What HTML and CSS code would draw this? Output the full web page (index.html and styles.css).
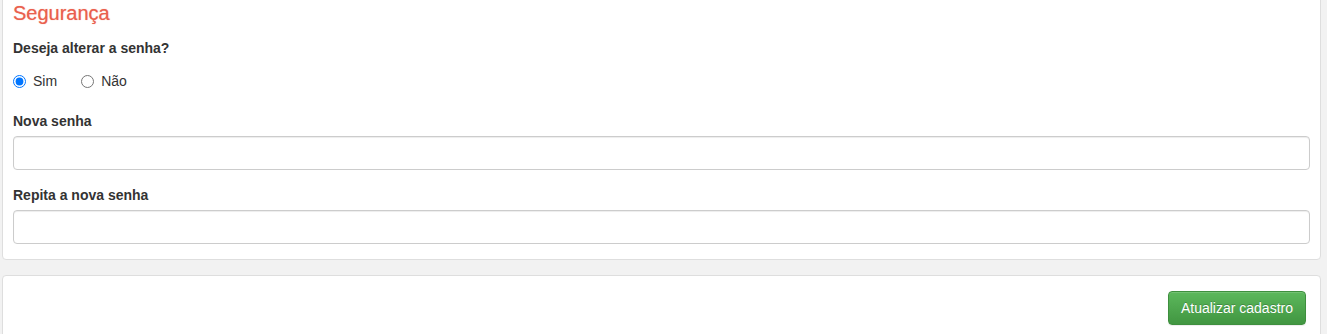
FILE: index.html
```html
<!DOCTYPE html>
<html lang="pt-BR">
<head>
<meta charset="utf-8">
<title>Segurança</title>
<link rel="stylesheet" href="styles.css">
</head>
<body>
<div class="page">
  <section class="panel panel-security">
    <h3 class="section-title">Segurança</h3>
    <div class="field">
      <span class="label">Deseja alterar a senha?</span>
    </div>
    <div class="radios">
      <label class="radio"><input type="radio" name="alterar" checked><span>Sim</span></label>
      <label class="radio"><input type="radio" name="alterar"><span>Não</span></label>
    </div>
    <div class="form-group">
      <label class="label" for="nova">Nova senha</label>
      <input class="form-control" id="nova" type="password">
    </div>
    <div class="form-group last">
      <label class="label" for="repita">Repita a nova senha</label>
      <input class="form-control" id="repita" type="password">
    </div>
  </section>
  <section class="panel panel-actions">
    <button class="btn-success" type="button">Atualizar cadastro</button>
  </section>
</div>
</body>
</html>
```

FILE: styles.css
```css
html, body {
  margin: 0;
  padding: 0;
  background: #f2f2f2;
  height: 100%;
  overflow: hidden;
}
body {
  font-family: "Liberation Sans", Arial, sans-serif;
  font-size: 14px;
  color: #333;
}
.page {
  padding: 0 6px 0 2px;
  display: flex;
  flex-direction: column;
  gap: 15px;
}
.panel {
  background: #fff;
  border: 1px solid #dedede;
  border-radius: 4px;
}
.panel-security {
  margin-top: -12px;
  padding: 13px 10px 15px 10px;
}
.section-title {
  margin: 0;
  font-size: 20px;
  line-height: 22px;
  font-weight: normal;
  color: #ea5f4d;
  text-shadow: 0 0 1px rgba(234, 95, 77, .6);
}
.field {
  margin-top: 14px;
}
.label {
  display: block;
  font-weight: bold;
  font-size: 14px;
  line-height: 20px;
  color: #333;
}
.radios {
  display: flex;
  gap: 24px;
  margin-top: 13px;
  height: 20px;
  align-items: center;
}
.radio {
  display: flex;
  align-items: center;
  gap: 7px;
  font-size: 14px;
  line-height: 20px;
  color: #333;
}
.radio input {
  margin: 0;
  width: 13px;
  height: 13px;
}
.form-group {
  margin-top: 20px;
}
.form-group.last {
  margin-top: 15px;
}
.form-group .label {
  margin-bottom: 5px;
}
.form-control {
  display: block;
  box-sizing: border-box;
  width: 100%;
  height: 34px;
  padding: 6px 12px;
  margin: 0;
  border: 1px solid #ccc;
  border-radius: 4px;
  background: #fff;
  box-shadow: inset 0 1px 1px rgba(0,0,0,.075);
  font: 14px "Liberation Sans", Arial, sans-serif;
}
.panel-actions {
  display: flex;
  justify-content: flex-end;
  padding: 15px 14px 15px 15px;
}
.btn-success {
  height: 34px;
  padding: 6px 12px;
  font: 14px/20px "Liberation Sans", Arial, sans-serif;
  color: #fff;
  text-shadow: 0 -1px 0 rgba(0,0,0,.2);
  background: linear-gradient(to bottom, #5cb85c 0%, #419641 100%);
  border: 1px solid #3e8f3e;
  border-radius: 4px;
  box-shadow: inset 0 1px 0 rgba(255,255,255,.15), 0 1px 1px rgba(0,0,0,.075);
  cursor: pointer;
}
```
